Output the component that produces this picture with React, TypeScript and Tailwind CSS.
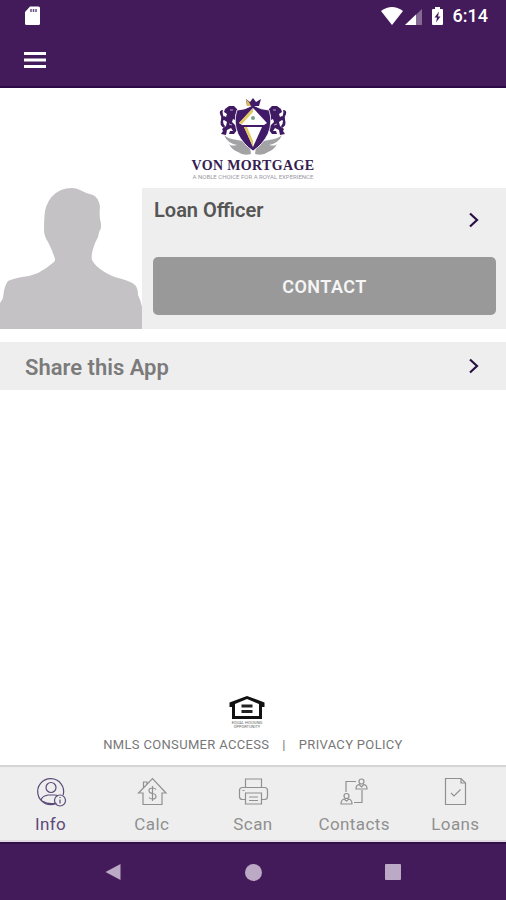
import type { ReactNode } from "react";

function StatusBar() {
  return (
    <div className="flex h-8 items-center justify-between px-6 text-white">
      <svg width="18" height="20" viewBox="0 0 18 20" aria-label="SD card">
        <path d="M6 0.500H14.500Q16 0.500 16 2V17.500Q16 19 14.500 19H2.500Q1 19 1 17.500V6Z" fill="#fff" />
        <path d="M7 3v3M9.500 3v3M12 3v3" stroke="#6b4a80" strokeWidth="1.500" />
      </svg>
      <div className="-mr-1.5 flex items-center">
        <svg width="70" height="20" viewBox="0 0 70 20" aria-label="Wi-Fi, mobile signal, battery charging">
          <path d="M2 5Q13 -3 24 5L13 19Z" fill="#fff" />
          <path d="M26 19L43 3V19Z" fill="#fff" fillOpacity="0.350" />
          <path d="M26 19L37 8.500V19Z" fill="#fff" />
          <path d="M56 1h5v2h2q1 0 1 1v14q0 1-1 1h-9q-1 0-1-1V4q0-1 1-1h2z" fill="#fff" />
          <path d="M60 5.500L55.500 11.500H58L57 16.500L61.500 10.500H59Z" fill="#441b5a" />
        </svg>
        <span className="ml-1 text-lg leading-5 font-medium">6:14</span>
      </div>
    </div>
  );
}

function Lion() {
  return (
    <g fill="#3f1a63">
      <path d="M8 11L12 8L17 8L20 11L21 15L18 17L21 20L20 23L16 21L15 24L19 28L20 32L17 36L12 36L13 33H16L14 30L10 32L9 37L4 36L6 33L5 31L9 28L10 24L7 22L5 23L4 21L7 18L9 19L10 16L7 14Z" />
      <path d="M7 30Q2 27 4 22Q5 19 3 16Q2 12 6 12Q5 14 6 17Q8 20 6 23Q6 26 8 28Z" />
      <path d="M13 12h3M12 26l3 1" stroke="#fff" strokeWidth="0.600" />
    </g>
  );
}

function Wing() {
  return (
    <g fill="#a3a3a5">
      <path d="M7 37Q11 41 20 42Q29 43 33 49L34 56Q30 51 25 51Q18 51 13 47Q16 48 20 47Q10 45 7 37Z" />
      <path d="M12 46Q16 50 26 50Q32 51 34 56Q26 58 21 54Q15 52 12 46Z" />
    </g>
  );
}

function Brand() {
  return (
    <div className="flex h-25 flex-col items-center pt-2.5">
      <svg width="72" height="60" viewBox="0 0 72 60" aria-hidden="true">
        <Wing />
        <g transform="translate(72 0) scale(-1 1)"><Wing /></g>
        <Lion />
        <g transform="translate(72 0) scale(-1 1)"><Lion /></g>
        <path d="M36 7Q44 12 52 12Q56 24 51 36Q46 46 36 53Q26 46 21 36Q16 24 20 12Q28 12 36 7Z" fill="#411b67" stroke="#fff" strokeWidth="0.800" />
        <path d="M29 1L33 4L36 0L39 4L44 1L42 8H30Z" fill="#411b67" />
        <path d="M29 1L32 4L34 8H30Z" fill="#d8bd58" />
        <path d="M36 10L50 25L47 27H25L22 25Z" fill="#fff" />
        <path d="M36 10L22 25L25 26L36 14Z" fill="#e3c85b" />
        <path d="M27 29H45L36 49Z" fill="#fff" />
        <path d="M27 29L36 49V43L30 29Z" fill="#e3c85b" />
        <circle cx="36" cy="20" r="2" fill="#7ba38b" />
      </svg>
      <div className="font-['Liberation_Serif',serif] text-[14px] leading-4 font-bold tracking-wide text-[#35204f]">VON MORTGAGE</div>
      <div className="text-[6px] leading-[6px] whitespace-nowrap text-[#9a99a1]">A NOBLE CHOICE FOR A ROYAL EXPERIENCE</div>
    </div>
  );
}

function Chevron() {
  return (
    <svg width="12" height="16" viewBox="0 0 12 16" fill="none" stroke="#281044" strokeWidth="2.200" aria-hidden="true">
      <path d="M2 1.500L9 8L2 14.500" />
    </svg>
  );
}

function Profile() {
  return (
    <section className="flex h-[141px]">
      <svg className="shrink-0" width="142" height="141" viewBox="0 0 142 141" aria-label="Loan officer portrait">
        <path
          d="M72 0Q66 0 61 2Q50 7 46 19Q44 24 44 42Q44 48 48 54Q52 62 54 68Q56 72 54 74Q46 81 38 85Q31 88 22 89Q12 91 8 93Q4 98 3 110Q2 112 0 115V141H142V119Q141 113 138 107Q138 100 135 97Q132 94 122 91Q110 88 103 83Q95 78 92 72Q91 68 93 61Q95 54 98 49Q99 43 101 40V35Q99 30 100 18Q98 9 93 7Q85 5 80 2Q76 0 72 0Z"
          fill="#c4c2c5"
        />
      </svg>
      <div className="flex min-w-0 flex-1 flex-col justify-between bg-[#eeeeee] pt-3 pr-2.5 pb-3.5 pl-[11px]">
        <a href="#officer" className="flex items-start justify-between pr-4 pl-px text-[20px] leading-5 font-semibold text-[#555555]">
          Loan Officer
          <span className="pt-3" aria-hidden="true"><Chevron /></span>
        </a>
        <button type="button" className="h-[58px] rounded-[5px] bg-[#999999] pt-px text-[18px] font-semibold tracking-wide text-[#f5f5f5]">
          CONTACT
        </button>
      </div>
    </section>
  );
}

function HousingMark() {
  return (
    <svg className="mr-3" width="36" height="33" viewBox="0 0 36 33" aria-label="Equal Housing Opportunity">
      <path d="M18 0L35.500 6.500V11H33V23H3V11H0.500V6.500Z" fill="#111" />
      <path d="M18 3L30 8V20H6V8Z" fill="#fff" />
      <path d="M12.500 8.500h11v3h-11zM12.500 14h11v3h-11z" fill="#222" />
      <g fill="#666" fontSize="4" fontFamily="Roboto, sans-serif" textAnchor="middle">
        <text x="18" y="28">EQUAL HOUSING</text>
        <text x="18" y="32">OPPORTUNITY</text>
      </g>
    </svg>
  );
}

function Footer() {
  return (
    <footer className="mt-auto flex flex-col items-center gap-2 pb-3">
      <HousingMark />
      <div className="flex gap-[13px] text-[13px] leading-4 tracking-wide text-[#777777]">
        <a href="#nmls">NMLS CONSUMER ACCESS</a>
        <span>|</span>
        <a href="#privacy">PRIVACY POLICY</a>
      </div>
    </footer>
  );
}

const tabs: { label: string; icon: ReactNode }[] = [
  {
    label: "Info",
    icon: (
      <>
        <path d="M21.500 28.200A13 13 0 1 1 28.200 20" />
        <circle cx="16" cy="12.500" r="5" />
        <path d="M6 25Q7 21 13 20H19Q22 20 23 21M7 26Q14 30 21 28" />
        <circle cx="25" cy="25.500" r="5.500" />
        <path d="M25 24.500v4M25 22v1" />
      </>
    ),
  },
  {
    label: "Calc",
    icon: (
      <>
        <path d="M2.500 18L16.500 3.500L30 18H26V29.500H7V18Z" />
        <path d="M7.500 13V7H11V9" />
        <path d="M20 14.500Q19 13 16.500 13Q13 13 13 15.500Q13 18 16.500 18.500Q20 19 20 21.500Q20 24 16.500 24Q14 24 13 22.500M16.500 11v15" />
      </>
    ),
  },
  {
    label: "Scan",
    icon: (
      <>
        <path d="M8.500 12.500V4H24.500V12.500M8.500 24.500H5.500Q2.500 24.500 2.500 21.500V15.500Q2.500 12.500 5.500 12.500H27.500Q30.500 12.500 30.500 15.500V21.500Q30.500 24.500 27.500 24.500H24.500" />
        <path d="M8.500 18H24.500V29H8.500ZM12 22H21M12 25.500H21M5.500 15.500h2" />
      </>
    ),
  },
  {
    label: "Contacts",
    icon: (
      <>
        <path d="M8 17V6.500H18M24 15V27.500H16" />
        <circle cx="23.500" cy="6.500" r="2.500" />
        <path d="M18 14Q18 10 21 9.500L23.500 12L26 9.500Q29 10 29 14Z" />
        <circle cx="8.500" cy="21" r="2.500" />
        <path d="M3 29Q3 25 6 24L8.500 26L11 24Q14 25 14 29Z" />
      </>
    ),
  },
  {
    label: "Loans",
    icon: (
      <>
        <path d="M6.500 3.500H22L26.500 8V29.500H6.500Z" />
        <path d="M22 3.500V8H26.500M12 18L15 21L21.500 14.500" />
      </>
    ),
  },
];

function TabBar() {
  return (
    <nav className="grid h-[77px] grid-cols-5 border-y-2 border-t-[#d5d5d5] border-b-[#e1dae5] bg-[#eeeeee]">
      {tabs.map((tab, i) => (
        <a
          key={tab.label}
          href={"#" + tab.label.toLowerCase()}
          className={"flex flex-col items-center gap-[7px] pt-2 " + (i === 0 ? "text-[#5b4a78]" : "text-[#909090]")}
        >
          <svg width="32" height="32" viewBox="0 0 32 32" fill="none" stroke="currentColor" strokeWidth="1.200" aria-hidden="true">
            {tab.icon}
          </svg>
          <span className="text-[17px] leading-5 tracking-wide">{tab.label}</span>
        </a>
      ))}
    </nav>
  );
}

function SystemBar() {
  return (
    <div className="flex h-[58px] justify-center gap-[100px] border-t-2 border-[#321047] bg-[#441b5a]">
      <button type="button" aria-label="Back" className="flex w-10 items-center justify-center">
        <svg width="16" height="18" viewBox="0 0 16 18"><path d="M0.500 9L15.500 1V17Z" fill="#bca9c5" /></svg>
      </button>
      <button type="button" aria-label="Home" className="flex w-10 items-center justify-center">
        <span className="size-[17px] rounded-full bg-[#bca9c5]" />
      </button>
      <button type="button" aria-label="Recent apps" className="flex w-10 items-center justify-center">
        <span className="size-4 rounded-[1px] bg-[#bca9c5]" />
      </button>
    </div>
  );
}

export default function App() {
  return (
    <div className="flex min-h-screen flex-col bg-white font-[Roboto,sans-serif]">
      <header className="h-22 border-b-2 border-[#2c0a45] bg-[#441b5a]">
        <StatusBar />
        <button type="button" aria-label="Open menu" className="ml-[23px] flex h-14 items-center">
          <svg width="24" height="18" viewBox="0 0 24 18" fill="#fff">
            <path d="M1 1h22v3H1zM1 7.500h22v3H1zM1 14h22v3H1z" />
          </svg>
        </button>
      </header>
      <main className="flex flex-1 flex-col">
        <Brand />
        <Profile />
        <a href="#share" className="mt-[13px] flex h-12 items-center justify-between bg-[#eeeeee] pr-[26px] pl-[25px] text-[22px] font-semibold text-[#7b7b7b]">
          <span className="pt-0.5">Share this App</span>
          <Chevron />
        </a>
        <Footer />
      </main>
      <TabBar />
      <SystemBar />
    </div>
  );
}
